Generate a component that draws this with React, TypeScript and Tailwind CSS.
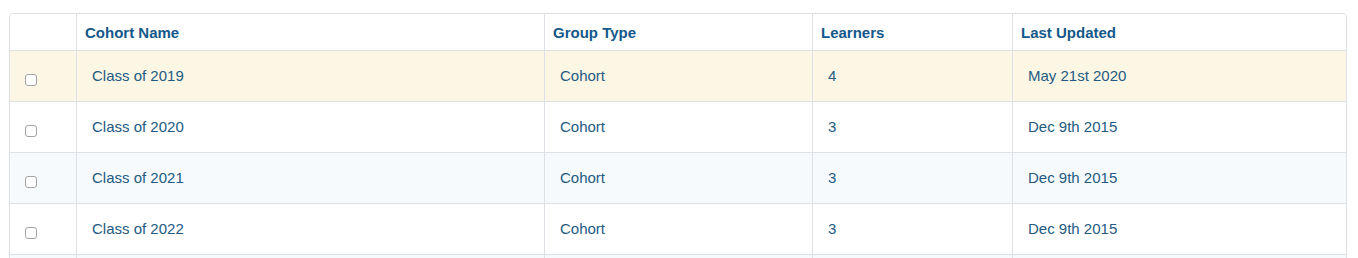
import React from "react";

const rows = [
  { name: "Class of 2019", type: "Cohort", learners: "4", updated: "May 21st 2020", bg: "bg-[#fcf7e5]" },
  { name: "Class of 2020", type: "Cohort", learners: "3", updated: "Dec 9th 2015", bg: "bg-white" },
  { name: "Class of 2021", type: "Cohort", learners: "3", updated: "Dec 9th 2015", bg: "bg-[#f6fafd]" },
  { name: "Class of 2022", type: "Cohort", learners: "3", updated: "Dec 9th 2015", bg: "bg-white" },
];

export default function App() {
  return (
    <div
      className="w-[1358px] h-[258px] overflow-hidden bg-white pl-[9px] pt-[13px]"
      style={{ fontFamily: '"Liberation Sans", Arial, Helvetica, sans-serif' }}
    >
      <div className="w-[1338px] border border-[#dcdfe2] rounded-[4px] overflow-hidden">
        <div className="flex h-[37px] border-b border-[#dde1e5] bg-white text-[15px] font-bold text-[#13588a]">
          <div className="w-[66px]" />
          <div className="w-[468px] border-l border-[#dde1e5] pl-[8px] pt-[2px] flex items-center">Cohort Name</div>
          <div className="w-[268px] border-l border-[#dde1e5] pl-[8px] pt-[2px] flex items-center">Group Type</div>
          <div className="w-[200px] border-l border-[#dde1e5] pl-[8px] pt-[2px] flex items-center">Learners</div>
          <div className="w-[334px] border-l border-[#dde1e5] pl-[8px] pt-[2px] flex items-center">Last Updated</div>
        </div>
        {rows.map((r) => (
          <div key={r.name} className={`flex h-[51px] border-b border-[#dde1e5] text-[15px] text-[#245a82] ${r.bg}`}>
            <div className="w-[66px] pl-[15px] pt-[23px]">
              <span className="block w-[12px] h-[12px] rounded-[3px] border border-[#a3a3a3] bg-white" />
            </div>
            <div className="w-[468px] border-l border-[#dde1e5] pl-[15px] flex items-center">{r.name}</div>
            <div className="w-[268px] border-l border-[#dde1e5] pl-[15px] flex items-center">{r.type}</div>
            <div className="w-[200px] border-l border-[#dde1e5] pl-[15px] flex items-center">{r.learners}</div>
            <div className="w-[334px] border-l border-[#dde1e5] pl-[15px] flex items-center">{r.updated}</div>
          </div>
        ))}
        <div className="flex h-[51px] bg-[#f6fafd]">
          <div className="w-[66px]" />
          <div className="w-[468px] border-l border-[#dde1e5]" />
          <div className="w-[268px] border-l border-[#dde1e5]" />
          <div className="w-[200px] border-l border-[#dde1e5]" />
          <div className="w-[334px] border-l border-[#dde1e5]" />
        </div>
      </div>
    </div>
  );
}
